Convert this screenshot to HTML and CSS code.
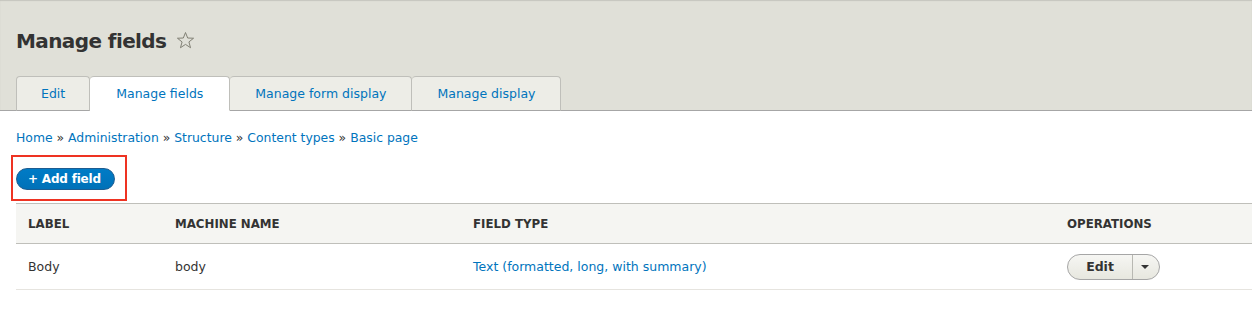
FILE: index.html
```html
<!DOCTYPE html>
<html lang="en">
<head>
    <meta charset="UTF-8">
    <meta name="viewport" content="width=device-width, initial-scale=1.0">
    <title>Manage fields</title>
    <link rel="stylesheet" href="styles.css">
</head>
<body>
    <!-- Page header with title and primary tabs -->
    <header class="page-header">
        <h1 class="page-title">
            Manage fields
            <svg class="shortcut-star" width="19" height="19" viewBox="0 0 20 20" aria-hidden="true">
                <path d="M10 1.6 L12.3 7.4 L18.5 7.6 L13.6 11.5 L15.3 17.6 L10 14.1 L4.7 17.6 L6.4 11.5 L1.5 7.6 L7.7 7.4 Z" fill="none" stroke="#7c7b70" stroke-width="1" stroke-linejoin="round"/>
            </svg>
        </h1>
        <nav class="tabs">
            <a href="#" class="tab">Edit</a>
            <a href="#" class="tab active">Manage fields</a>
            <a href="#" class="tab">Manage form display</a>
            <a href="#" class="tab">Manage display</a>
        </nav>
    </header>

    <!-- Main content -->
    <main class="content">
        <nav class="breadcrumb">
            <a href="#">Home</a> &raquo; <a href="#">Administration</a> &raquo; <a href="#">Structure</a> &raquo; <a href="#">Content types</a> &raquo; <a href="#">Basic page</a>
        </nav>

        <div class="action-links">
            <a href="#" class="button-action">+ Add field</a>
        </div>

        <table class="field-table">
            <colgroup>
                <col class="col-label">
                <col class="col-machine">
                <col class="col-type">
                <col>
            </colgroup>
            <thead>
                <tr>
                    <th>Label</th>
                    <th>Machine name</th>
                    <th>Field type</th>
                    <th>Operations</th>
                </tr>
            </thead>
            <tbody>
                <tr>
                    <td>Body</td>
                    <td>body</td>
                    <td><a href="#">Text (formatted, long, with summary)</a></td>
                    <td>
                        <div class="dropbutton">
                            <a href="#" class="dropbutton-action">Edit</a>
                            <span class="dropbutton-toggle"><span class="arrow"></span></span>
                        </div>
                    </td>
                </tr>
            </tbody>
        </table>
    </main>
</body>
</html>
```

FILE: styles.css
```css
:root {
    --link-color: #0074bd;
    --text-color: #333;
    --header-bg: #e0e0d8;
    --tab-bg: #ededE7;
    --tab-border: #bfbfba;
    --table-head-bg: #f5f5f2;
    --row-border: #e6e4df;
}

body {
    margin: 0;
    font-family: 'DejaVu Sans', 'Liberation Sans', sans-serif;
    font-size: 12.5px;
    color: var(--text-color);
    background: #fff;
}

a {
    color: var(--link-color);
    text-decoration: none;
}

/* Header */
.page-header {
    background: var(--header-bg);
    border-bottom: 1px solid #a6a6a6;
    box-shadow: inset 0 1px 1px rgba(0, 0, 0, 0.12);
    padding: 29px 0 0 16px;
}

.page-title {
    margin: 0 0 22px 0;
    font-size: 20px;
    font-weight: 700;
    line-height: 25px;
    letter-spacing: -0.6px;
    display: flex;
    align-items: center;
    gap: 10px;
}

.shortcut-star {
    margin-top: -2px;
}

.tabs {
    display: flex;
    margin-bottom: -1px;
}

.tab {
    background: var(--tab-bg);
    border: 1px solid var(--tab-border);
    border-bottom-color: #a6a6a6;
    border-left: none;
    border-radius: 4px 4px 0 0;
    height: 33px;
    line-height: 34px;
    padding: 0 25px;
}

.tab:first-child {
    border-left: 1px solid var(--tab-border);
    padding: 0 24px;
}

.tab.active {
    background: #fff;
    border-bottom-color: #fff;
    padding: 0 26px;
}

/* Content */
.content {
    padding: 0 0 0 16px;
}

.breadcrumb {
    padding-top: 19px;
    line-height: 16px;
    font-size: 12.4px;
}

.action-links {
    display: inline-block;
    margin: 9px 0 2px -5px;
    padding: 11px 10px 9px 3px;
    border: 2px solid #ee3322;
}

.button-action {
    display: inline-block;
    height: 20px;
    line-height: 20px;
    padding: 0 13px 0 11px;
    border: 1px solid #1e5c90;
    border-radius: 12px;
    background: linear-gradient(to bottom, #007bc6, #0071b8);
    color: #fff;
    font-weight: 700;
    font-size: 12px;
    letter-spacing: -0.2px;
}

/* Field table */
.field-table {
    width: 100%;
    border-collapse: collapse;
}

.col-label { width: 147px; }
.col-machine { width: 298px; }
.col-type { width: 594px; }

.field-table th {
    background: var(--table-head-bg);
    border-top: 1px solid var(--tab-border);
    border-bottom: 1px solid var(--tab-border);
    text-align: left;
    text-transform: uppercase;
    font-size: 11.8px;
    font-weight: 700;
    height: 39px;
    padding: 0 12px;
}

.field-table td {
    border-bottom: 1px solid var(--row-border);
    height: 45px;
    padding: 0 12px;
}

/* Operations dropbutton */
.dropbutton {
    display: inline-flex;
    height: 24px;
    border: 1px solid #a6a6a6;
    border-radius: 13px;
    background: linear-gradient(to bottom, #f6f6f3, #e7e7df);
    overflow: hidden;
}

.dropbutton-action {
    width: 64px;
    text-align: center;
    line-height: 24px;
    color: var(--text-color);
    font-weight: 700;
    border-right: 1px solid #b8b8b2;
}

.dropbutton-toggle {
    width: 26px;
    display: flex;
    align-items: center;
    justify-content: center;
}

.arrow {
    width: 0;
    height: 0;
    border-left: 4px solid transparent;
    border-right: 4px solid transparent;
    border-top: 4px solid #333;
    margin-right: 2px;
}
```
